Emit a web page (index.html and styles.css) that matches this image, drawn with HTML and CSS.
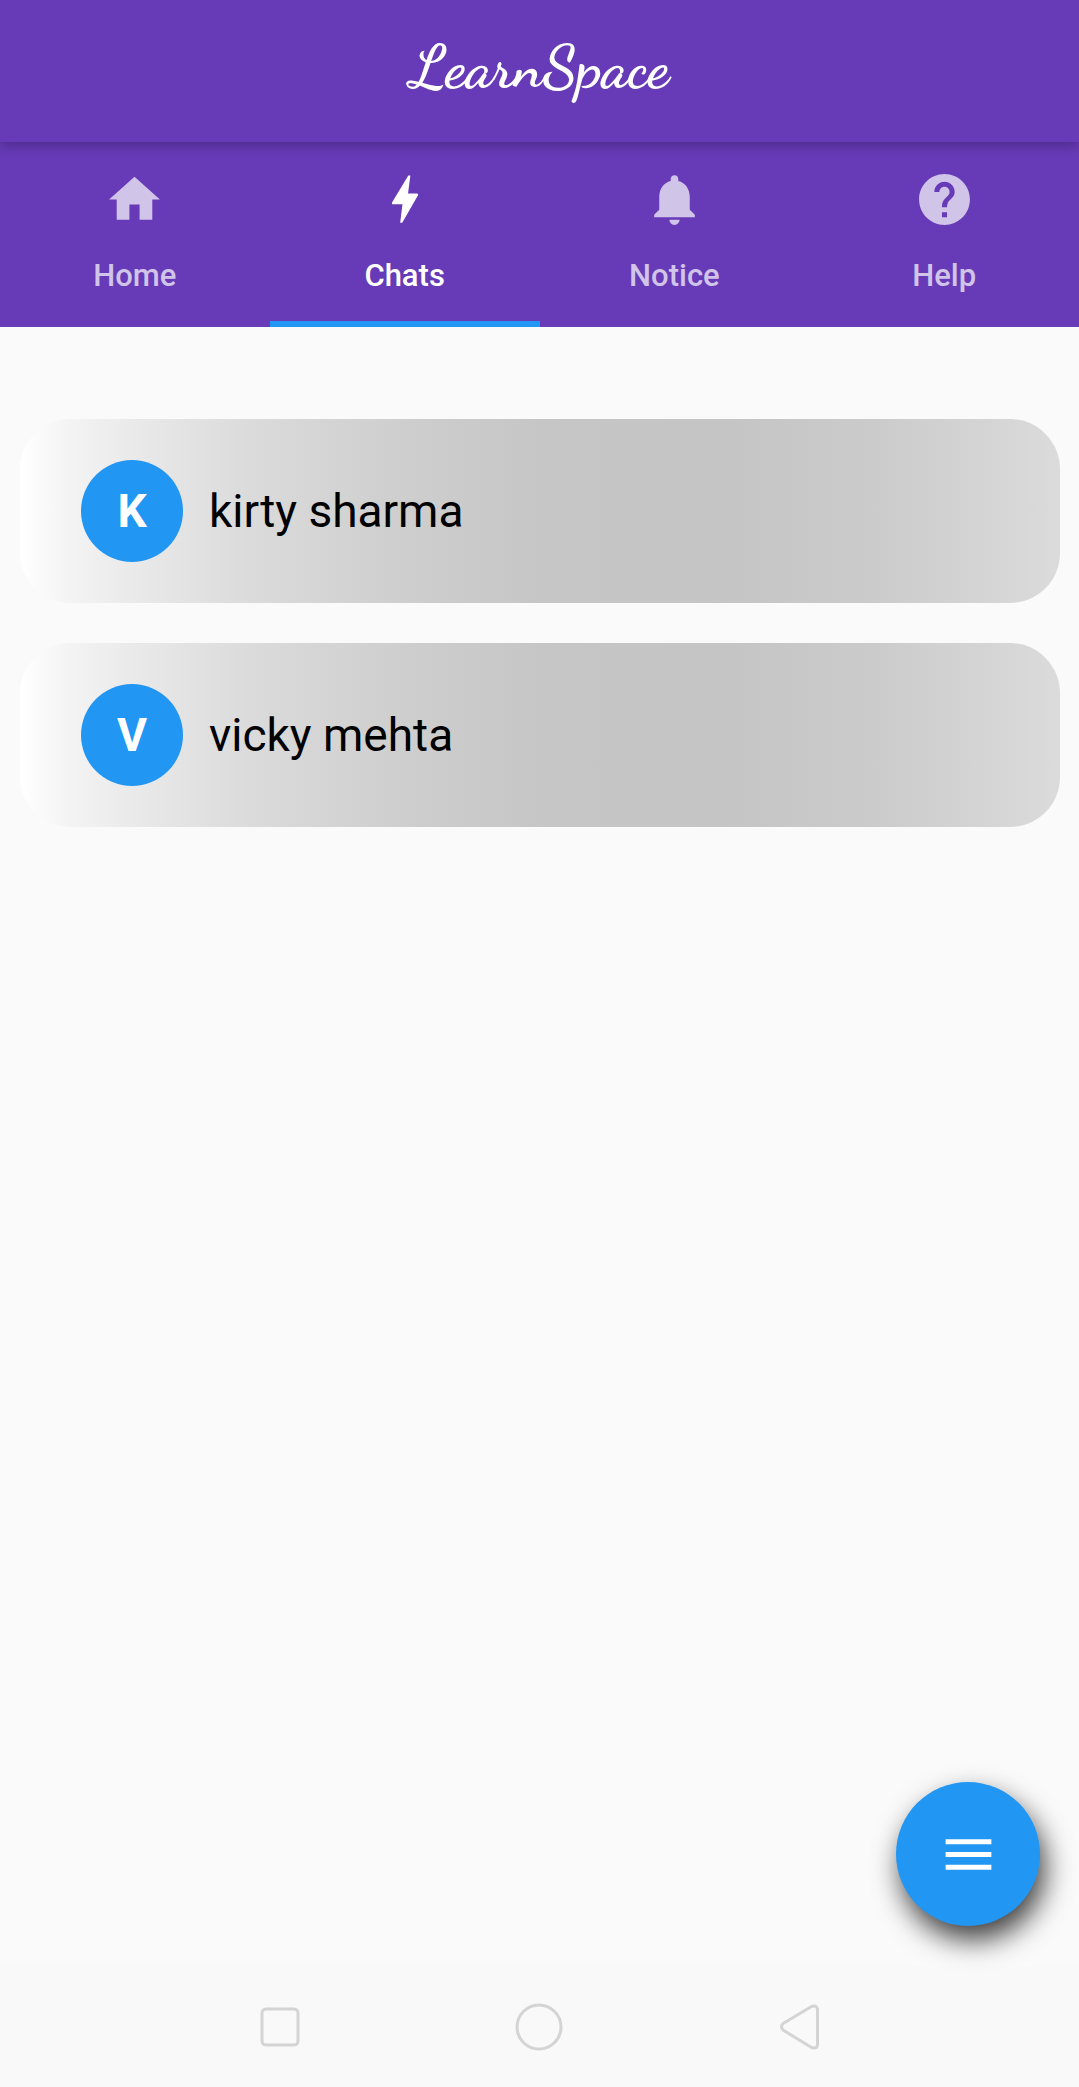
FILE: index.html
```html
<!DOCTYPE html>
<html lang="en">
<head>
  <meta charset="utf-8">
  <meta name="viewport" content="width=device-width, initial-scale=1">
  <title>LearnSpace</title>
  <link rel="stylesheet" href="styles.css">
</head>
<body>
  <header class="app-bar">
    <h1 class="brand">LearnSpace</h1>
  </header>

  <nav class="tabs" aria-label="Sections">
    <a class="tab" href="#home">
      <svg class="icon" viewBox="0 0 24 24" aria-hidden="true"><path d="M10 20v-6h4v6h5v-8h3L12 3 2 12h3v8z"/></svg>
      <span>Home</span>
    </a>
    <a class="tab tab-active" href="#chats" aria-current="page">
      <svg class="icon" viewBox="0 0 24 24" aria-hidden="true"><path d="M13.500 2.600h.8l-.9 7h3.400q.9 0 .4.900L11.100 21.100h-.8l.9-7.200H7.500q-.7 0-.3-.9z"/></svg>
      <span>Chats</span>
    </a>
    <a class="tab" href="#notice">
      <svg class="icon" viewBox="0 0 24 24" aria-hidden="true"><path d="M12 22c1.100 0 2-.9 2-2h-4c0 1.100.89 2 2 2zm6-6v-5c0-3.070-1.640-5.640-4.500-6.320V4c0-.83-.67-1.500-1.500-1.500s-1.500.67-1.500 1.500v.68C7.630 5.360 6 7.920 6 11v5l-2 2v1h16v-1l-2-2z"/></svg>
      <span>Notice</span>
    </a>
    <a class="tab" href="#help">
      <svg class="icon" viewBox="0 0 24 24" aria-hidden="true"><path d="M12 2C6.480 2 2 6.480 2 12s4.480 10 10 10 10-4.480 10-10S17.520 2 12 2zm1 17h-2v-2h2v2zm2.070-7.750l-.9.920C13.450 12.900 13 13.500 13 15h-2v-.5c0-1.100.45-2.100 1.170-2.830l1.240-1.260c.37-.36.59-.86.59-1.410 0-1.100-.9-2-2-2s-2 .9-2 2H8c0-2.210 1.790-4 4-4s4 1.790 4 4c0 .88-.36 1.680-.93 2.250z"/></svg>
      <span>Help</span>
    </a>
  </nav>

  <main class="content">
    <ul class="chats">
      <li><a class="chat" href="#kirty"><span class="avatar">K</span><span>kirty sharma</span></a></li>
      <li><a class="chat" href="#vicky"><span class="avatar">V</span><span>vicky mehta</span></a></li>
    </ul>
  </main>

  <button class="fab" type="button" aria-label="Menu">
    <svg class="icon" viewBox="0 0 24 24" aria-hidden="true"><path d="M3 18h18v-2H3v2zm0-5h18v-2H3v2zm0-7v2h18V6H3z"/></svg>
  </button>

  <footer class="system-bar">
    <button class="system-button" type="button" aria-label="Recent apps">
      <svg class="outline" viewBox="0 0 48 48" aria-hidden="true"><rect x="6" y="6" width="36" height="36" rx="4"/></svg>
    </button>
    <button class="system-button" type="button" aria-label="Home screen">
      <svg class="outline" viewBox="0 0 48 48" aria-hidden="true"><circle cx="24" cy="24" r="22"/></svg>
    </button>
    <button class="system-button" type="button" aria-label="Back">
      <svg class="outline" viewBox="0 0 48 48" aria-hidden="true"><path d="M8 20.500 36.500 3.500Q42 1.500 42.500 6.500V41.500Q42 46.500 36.500 44.500L8 27Q5 24 8 20.500z"/></svg>
    </button>
  </footer>
</body>
</html>
```
FILE: styles.css
```css
* {
  box-sizing: border-box;
}

body {
  margin: 0;
  min-height: 100vh;
  display: flex;
  flex-direction: column;
  background: #fafafa;
  color: #000;
  font-family: Roboto, "Liberation Sans", sans-serif;
}

a {
  color: inherit;
  text-decoration: none;
}

button {
  padding: 0;
  border: 0;
  background: none;
}

.icon {
  width: 61px;
  height: 61px;
  fill: currentColor;
}

.app-bar {
  position: relative;
  height: 142px;
  padding-bottom: 8px;
  display: flex;
  justify-content: center;
  align-items: center;
  background: #673ab7;
  color: #fff;
  box-shadow: 0 4px 12px rgba(0, 0, 0, 0.24);
}

.brand {
  margin: 0;
  font-family: "Dancing Script", cursive;
  font-size: 60px;
  font-weight: 700;
  line-height: 72px;
}

.tabs {
  display: grid;
  grid-template-columns: repeat(4, 1fr);
  background: #673ab7;
  color: #d1c4e9;
}

.tab {
  height: 185px;
  padding-top: 27px;
  display: flex;
  flex-direction: column;
  align-items: center;
  gap: 28px;
  border-bottom: 6px solid transparent;
  font-size: 31px;
  font-weight: 500;
  line-height: 36px;
}

.tab-active {
  border-bottom-color: #2196f3;
  color: #fff;
}

.content {
  flex: 1;
  padding: 92px 19px 92px 20px;
}

.chats {
  margin: 0;
  padding: 0;
  display: flex;
  flex-direction: column;
  gap: 40px;
  list-style: none;
}

.chat {
  height: 184px;
  padding: 0 61px;
  display: flex;
  align-items: center;
  gap: 26px;
  border-radius: 50px;
  background: linear-gradient(90deg, #fff, #f3f3f3 5%, #e8e8e8 12%, #dbdbdb 22%, #cecece 37%, #c6c6c6 50%, #c5c5c5 68%, #cbcbcb 82%, #dbdbdb);
  font-size: 46px;
  line-height: 56px;
}

.avatar {
  width: 102px;
  height: 102px;
  display: grid;
  place-items: center;
  border-radius: 50%;
  background: #2196f3;
  color: #fff;
  font-weight: 700;
}

.fab {
  position: fixed;
  right: 39px;
  bottom: 161px;
  width: 144px;
  height: 144px;
  display: grid;
  place-items: center;
  border-radius: 50%;
  background: #2196f3;
  color: #fff;
  box-shadow: 5px 14px 28px rgba(0, 0, 0, 0.75);
}

.system-bar {
  height: 121px;
  padding: 0 150px;
  display: grid;
  grid-template-columns: repeat(3, 1fr);
  background: #f9f9f9;
}

.system-button {
  display: grid;
  place-items: center;
}

.outline {
  width: 48px;
  height: 48px;
  fill: none;
  stroke: #d4d4d4;
  stroke-width: 3;
}
```
